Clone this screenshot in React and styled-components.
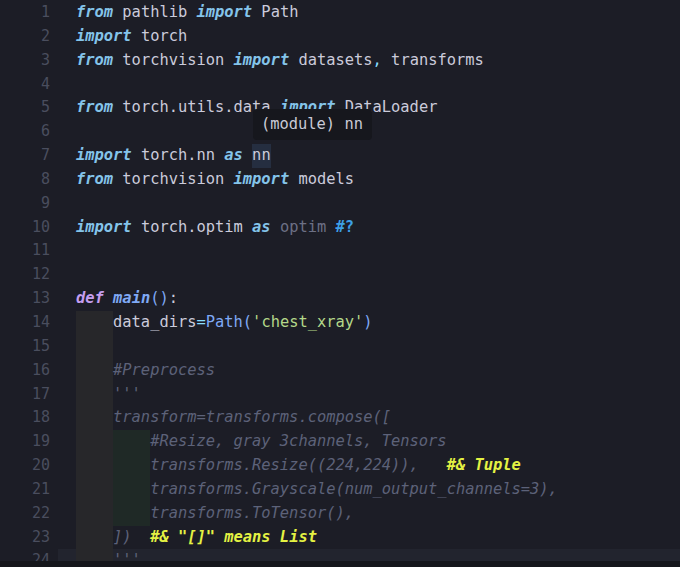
import React from "react";
import styled, { createGlobalStyle } from "styled-components";

const GlobalStyle = createGlobalStyle`
  html, body {
    margin: 0;
    padding: 0;
    background: #1c1d26;
    overflow: hidden;
  }
`;

const colors = {
  kw: "#84c4ea",
  id: "#cbcbdb",
  def: "#c49ef0",
  fn: "#7fa9f5",
  op: "#89ddff",
  str: "#b4d88a",
  cm: "#5d6279",
  dim: "#6c7085",
  q: "#3d9fe6",
  hl: "#e4f243",
};

// [type, text] tokens for every line, indent = number of 4-space levels
const lines = [
  { t: [["kwi", "from"], ["id", " pathlib "], ["kwi", "import"], ["id", " Path"]] },
  { t: [["kwi", "import"], ["id", " torch"]] },
  { t: [["kwi", "from"], ["id", " torchvision "], ["kwi", "import"], ["id", " datasets"], ["op", ","], ["id", " transforms"]] },
  { t: [] },
  { t: [["kwi", "from"], ["id", " torch.utils.data "], ["kwi", "import"], ["id", " DataLoader"]] },
  { t: [] },
  { t: [["kwi", "import"], ["id", " torch.nn "], ["kwi", "as"], ["id", " "], ["sel", "nn"]] },
  { t: [["kwi", "from"], ["id", " torchvision "], ["kwi", "import"], ["id", " models"]] },
  { t: [] },
  { t: [["kwi", "import"], ["id", " torch.optim "], ["kwi", "as"], ["dim", " optim "], ["q", "#?"]] },
  { t: [] },
  { t: [] },
  { t: [["def", "def"], ["id", " "], ["fn", "main"], ["fnp", "()"], ["id", ":"]] },
  { indent: 1, t: [["id", "data_dirs"], ["op", "="], ["cls", "Path"], ["fnp", "("], ["str", "'chest_xray'"], ["fnp", ")"]] },
  { indent: 1, t: [] },
  { indent: 1, t: [["cm", "#Preprocess"]] },
  { indent: 1, t: [["cm", "'''"]] },
  { indent: 1, t: [["cm", "transform=transforms.compose(["]] },
  { indent: 2, t: [["cm", "#Resize, gray 3channels, Tensors"]] },
  { indent: 2, t: [["cm", "transforms.Resize((224,224)),   "], ["hl", "#& Tuple"]] },
  { indent: 2, t: [["cm", "transforms.Grayscale(num_output_channels=3),"]] },
  { indent: 2, t: [["cm", "transforms.ToTensor(),"]] },
  { indent: 1, t: [["cm", "])  "], ["hl", "#& \"[]\" means List"]] },
  { indent: 1, t: [["cm", "'''"]], current: true },
];

const App = () => {
  return (
    <Page>
      <GlobalStyle />
      <Editor>
        <Lines>
          {lines.map((line, i) => (
            <Row key={i}>
              <LineNo>{i + 1}</LineNo>
              <Code $current={line.current}>
                {Array.from({ length: line.indent || 0 }).map((_, lvl) => (
                  <Indent key={lvl} $level={lvl} />
                ))}
                {line.t.map(([type, text], j) =>
                  type === "sel" ? (
                    <Selected key={j}>{text}</Selected>
                  ) : (
                    <Token key={j} $type={type}>
                      {text}
                    </Token>
                  )
                )}
              </Code>
            </Row>
          ))}
        </Lines>
        <Tooltip>(module) nn</Tooltip>
      </Editor>
      <BottomStrip />
    </Page>
  );
};

const Page = styled.div`
  width: 680px;
  height: 567px;
  display: flex;
  flex-direction: column;
  background: #1c1d26;
`;

const Editor = styled.div`
  position: relative;
  flex: 1;
  overflow: hidden;
  font-family: "DejaVu Sans Mono", "Liberation Mono", monospace;
  font-size: 15.4px;
`;

const Lines = styled.div`
  margin-top: 1px;
`;

const Row = styled.div`
  display: flex;
  height: 23.85px;
  line-height: 23.85px;
  white-space: pre;
`;

const LineNo = styled.div`
  width: 50px;
  flex: none;
  text-align: right;
  color: #4a4e5e;
  font-size: 15px;
`;

const Code = styled.div`
  flex: 1;
  margin-left: 8px;
  padding-left: 18px;
  display: flex;
  background: ${(p) => (p.$current ? "#22242e" : "transparent")};
`;

const Indent = styled.span`
  display: inline-block;
  width: 4ch;
  height: 100%;
  background: ${(p) => (p.$level === 0 ? "#27272a" : "#1f2926")};
`;

const Token = styled.span`
  color: ${(p) =>
    ({
      kwi: colors.kw,
      id: colors.id,
      def: colors.def,
      fn: colors.fn,
      fnp: colors.fn,
      cls: colors.fn,
      op: colors.op,
      str: colors.str,
      cm: colors.cm,
      dim: colors.dim,
      q: colors.q,
      hl: colors.hl,
    })[p.$type]};
  font-style: ${(p) =>
    ["kwi", "def", "fn", "cm", "hl"].includes(p.$type) ? "italic" : "normal"};
  font-weight: ${(p) =>
    ["kwi", "def", "fn", "q", "hl"].includes(p.$type) ? "bold" : "normal"};
`;

const Selected = styled.span`
  color: ${colors.id};
  background: #252e40;
`;

const Tooltip = styled.div`
  position: absolute;
  left: 253px;
  top: 109px;
  width: 119px;
  height: 31px;
  box-sizing: border-box;
  padding-left: 8px;
  line-height: 31px;
  background: #16171d;
  border-radius: 4px;
  color: #c9cad6;
  white-space: pre;
`;

const BottomStrip = styled.div`
  height: 6px;
  flex: none;
  background: #15161b;
`;

export default App;
